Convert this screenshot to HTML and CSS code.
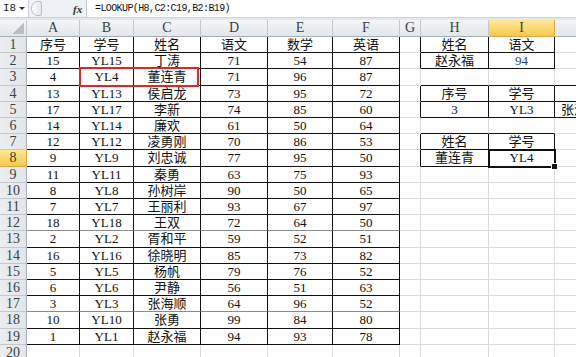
FILE: index.html
```html
<!DOCTYPE html>
<html lang="zh-CN">

<head>
  <meta charset="UTF-8">
  <meta name="viewport" content="width=device-width, initial-scale=1.0">
  <title>LOOKUP 查找</title>
  <link rel="stylesheet" href="styles.css">
</head>

<body>
  <div class="top">
    <div class="fbar">
      <div class="namebox">I8<span class="drop"></span></div>
      <span class="grip"></span>
      <span class="fx">fx</span>
      <div class="formula">=LOOKUP(H8,C2:C19,B2:B19)</div>
    </div>
  </div>

  <div class="sheet">
    <table class="grid">
      <colgroup>
        <col class="c-rh"><col class="c-a"><col class="c-b"><col class="c-c"><col class="c-d"><col class="c-e"><col class="c-f"><col class="c-g"><col class="c-h"><col class="c-i"><col class="c-j">
      </colgroup>
      <thead>
        <tr class="hd">
          <th class="corner"></th><th>A</th><th>B</th><th>C</th><th>D</th><th>E</th><th>F</th><th>G</th><th>H</th><th class="sel">I</th><th></th>
        </tr>
      </thead>
      <tbody>
        <tr><th>1</th><td class="k">序号</td><td class="k">学号</td><td class="k">姓名</td><td class="k">语文</td><td class="k">数学</td><td class="k">英语</td><td class="kr"></td><td class="k">姓名</td><td class="k">语文</td><td></td></tr>
        <tr><th>2</th><td class="k">15</td><td class="k">YL15</td><td class="k">丁涛</td><td class="k">71</td><td class="k">54</td><td class="k">87</td><td class="kr"></td><td class="k">赵永福</td><td class="k blue">94</td><td></td></tr>
        <tr class="x"><th>3</th><td class="k">4</td><td class="k">YL4</td><td class="k">董连青</td><td class="k">71</td><td class="k">96</td><td class="k">87</td><td></td><td class="kb"></td><td class="kb"></td><td class="kb"></td></tr>
        <tr><th>4</th><td class="k">13</td><td class="k">YL13</td><td class="k">侯启龙</td><td class="k">73</td><td class="k">95</td><td class="k">72</td><td class="kr"></td><td class="k">序号</td><td class="k">学号</td><td class="k"></td></tr>
        <tr><th>5</th><td class="k">17</td><td class="k">YL17</td><td class="k">李新</td><td class="k">74</td><td class="k">85</td><td class="k">60</td><td class="kr"></td><td class="k">3</td><td class="k">YL3</td><td class="k left">张海顺</td></tr>
        <tr><th>6</th><td class="k">14</td><td class="k">YL14</td><td class="k">廉欢</td><td class="k">61</td><td class="k">50</td><td class="k">64</td><td></td><td class="kb"></td><td class="kb"></td><td></td></tr>
        <tr><th>7</th><td class="k">12</td><td class="k">YL12</td><td class="k">凌勇刚</td><td class="k">70</td><td class="k">86</td><td class="k">53</td><td class="kr"></td><td class="k">姓名</td><td class="k">学号</td><td></td></tr>
        <tr class="x"><th class="sel">8</th><td class="k">9</td><td class="k">YL9</td><td class="k">刘忠诚</td><td class="k">77</td><td class="k">95</td><td class="k">50</td><td class="kr"></td><td class="k">董连青</td><td class="k">YL4</td><td></td></tr>
        <tr><th>9</th><td class="k">11</td><td class="k">YL11</td><td class="k">秦勇</td><td class="k">63</td><td class="k">75</td><td class="k">93</td><td></td><td></td><td></td><td></td></tr>
        <tr><th>10</th><td class="k">8</td><td class="k">YL8</td><td class="k">孙树岸</td><td class="k">90</td><td class="k">50</td><td class="k">65</td><td></td><td></td><td></td><td></td></tr>
        <tr><th>11</th><td class="k">7</td><td class="k">YL7</td><td class="k">王丽利</td><td class="k">93</td><td class="k">67</td><td class="k">97</td><td></td><td></td><td></td><td></td></tr>
        <tr class="soft"><th>12</th><td class="k">18</td><td class="k">YL18</td><td class="k">王双</td><td class="k">72</td><td class="k">64</td><td class="k">50</td><td></td><td></td><td></td><td></td></tr>
        <tr class="x"><th>13</th><td class="k">2</td><td class="k">YL2</td><td class="k">胥和平</td><td class="k">59</td><td class="k">52</td><td class="k">51</td><td></td><td></td><td></td><td></td></tr>
        <tr><th>14</th><td class="k">16</td><td class="k">YL16</td><td class="k">徐晓明</td><td class="k">85</td><td class="k">73</td><td class="k">82</td><td></td><td></td><td></td><td></td></tr>
        <tr><th>15</th><td class="k">5</td><td class="k">YL5</td><td class="k">杨帆</td><td class="k">79</td><td class="k">76</td><td class="k">52</td><td></td><td></td><td></td><td></td></tr>
        <tr><th>16</th><td class="k">6</td><td class="k">YL6</td><td class="k">尹静</td><td class="k">56</td><td class="k">51</td><td class="k">63</td><td></td><td></td><td></td><td></td></tr>
        <tr class="soft"><th>17</th><td class="k">3</td><td class="k">YL3</td><td class="k">张海顺</td><td class="k">64</td><td class="k">96</td><td class="k">52</td><td></td><td></td><td></td><td></td></tr>
        <tr class="x"><th>18</th><td class="k">10</td><td class="k">YL10</td><td class="k">张勇</td><td class="k">99</td><td class="k">84</td><td class="k">80</td><td></td><td></td><td></td><td></td></tr>
        <tr><th>19</th><td class="k">1</td><td class="k">YL1</td><td class="k">赵永福</td><td class="k">94</td><td class="k">93</td><td class="k">78</td><td></td><td></td><td></td><td></td></tr>
        <tr><th>20</th><td></td><td></td><td></td><td></td><td></td><td></td><td></td><td></td><td></td><td></td></tr>
      </tbody>
    </table>

    <!-- 手画的红框，盖在 B3:C3 上 -->
    <div class="mark"></div>
    <!-- 当前选中单元格 I8 -->
    <div class="cursor"><span class="handle"></span></div>
  </div>
</body>

</html>
```

FILE: styles.css
```css
body {
  margin: 0;
  width: 576px;
  height: 357px;
  overflow: hidden;
  background: #fff;
  font-family: "Liberation Serif", "Noto Sans CJK SC", serif;
}

/* 编辑栏 */
.top {
  height: 20px;
  background: #e4e8ed;
}

.fbar {
  display: flex;
  align-items: center;
  height: 17px;
  background: #eef1f5;
  border-bottom: 1px solid #cfd4da;
}

.namebox {
  position: relative;
  width: 29px;
  height: 17px;
  padding-left: 3px;
  box-sizing: border-box;
  background: #fff;
  border-right: 1px solid #c9ced4;
  font: 11px/17px "Liberation Mono", monospace;
  color: #222;
}

.drop {
  position: absolute;
  right: 3px;
  top: 7px;
  border-left: 3px solid transparent;
  border-right: 3px solid transparent;
  border-top: 3px solid #333;
}

.grip {
  width: 9px;
  height: 13px;
  margin-left: 2px;
  border: 1px solid #b9c0c8;
  border-radius: 7px 2px 2px 7px;
  background: linear-gradient(to right, #fdfdfd, #e3e7ec);
}

.fx {
  margin-left: 31px;
  width: 13px;
  font: italic bold 11px "Liberation Serif", serif;
  color: #333;
}

.formula {
  flex: 1;
  height: 17px;
  padding-left: 8px;
  background: #fff;
  border-left: 1px solid #c4c9cf;
  font: 10px/17px "Liberation Mono", monospace;
  letter-spacing: -0.6px;
  color: #111;
}

/* 表格 */
.sheet {
  position: relative;
}

.grid {
  table-layout: fixed;
  width: 621px;
  border-collapse: separate;
  border-spacing: 0;
}

.c-rh { width: 27px; }
.c-a { width: 53px; }
.c-b { width: 54px; }
.c-c { width: 67px; }
.c-d { width: 67px; }
.c-e { width: 65px; }
.c-f { width: 67px; }
.c-g { width: 21px; }
.c-h { width: 68px; }
.c-i { width: 66px; }
.c-j { width: 66px; }

.grid tr {
  height: 16px;
}

.grid tr.x {
  height: 17px;
}

.grid tr.hd {
  height: 17px;
}

.grid th,
.grid td {
  padding: 0;
  line-height: 14px;
  white-space: nowrap;
  overflow: hidden;
}

.grid th {
  font-weight: normal;
  font-size: 14px;
  color: #3b3f45;
  background: linear-gradient(#f4f5f7, #e3e6ea);
  border-right: 1px solid #c3c8cf;
  border-bottom: 1px solid #c3c8cf;
}

.grid thead th {
  border-bottom-color: #a7b0bb;
}

.grid tbody th {
  background: linear-gradient(to right, #eceef1, #e2e5e9);
  border-right-color: #a7b0bb;
}

.grid th.sel {
  background: linear-gradient(#fde89c, #f6c94c);
  border-color: #e4a83a;
  color: #4a3b12;
}

.grid th.corner {
  background:
    linear-gradient(to bottom right, transparent 50%, #b9bec5 50%) right 2px bottom 2px / 11px 11px no-repeat,
    linear-gradient(#f4f5f7, #e3e6ea);
}

.grid td {
  font-size: 13px;
  color: #111;
  text-align: center;
  background: #fff;
  border-right: 1px solid #dadcdf;
  border-bottom: 1px solid #dadcdf;
}

.grid td.k {
  border-right-color: #111;
  border-bottom-color: #111;
}

.grid td.kr {
  border-right-color: #111;
}

.grid td.kb {
  border-bottom-color: #111;
}

.grid tr.soft td.k {
  border-bottom-color: #8c8c8c;
}

.grid td.left {
  text-align: left;
  padding-left: 6px;
}

.grid td.blue {
  color: #1d3f8f;
}

.mark {
  position: absolute;
  left: 79px;
  top: 47px;
  width: 120px;
  height: 20px;
  box-sizing: border-box;
  border: 2px solid #ef1f1f;
}

.cursor {
  position: absolute;
  left: 488px;
  top: 129px;
  width: 68px;
  height: 19px;
  box-sizing: border-box;
  border: 2px solid #111;
}

.handle {
  position: absolute;
  right: -4px;
  bottom: -4px;
  width: 5px;
  height: 5px;
  background: #111;
  border: 1px solid #fff;
}
```
